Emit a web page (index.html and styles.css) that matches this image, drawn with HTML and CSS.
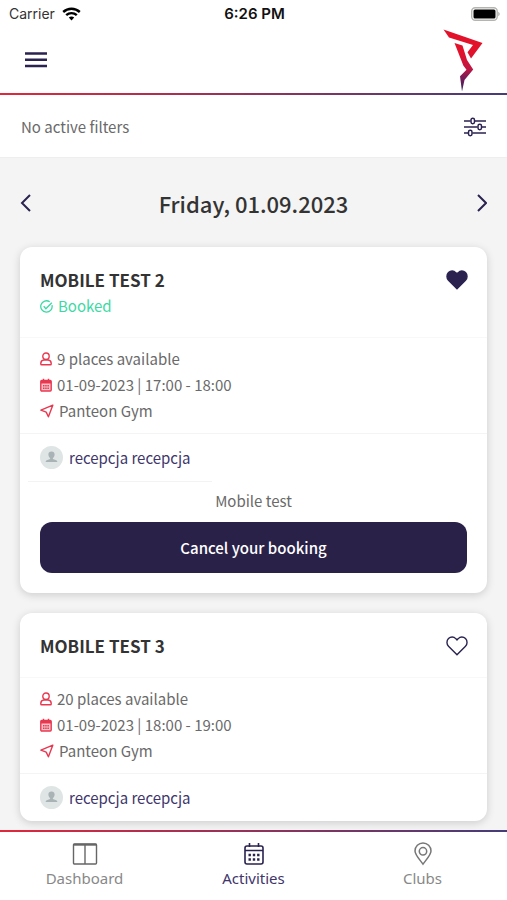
FILE: index.html
```html
<!DOCTYPE html>
<html lang="en">
<head>
<meta charset="utf-8">
<meta name="viewport" content="width=device-width, initial-scale=1">
<title>Activities</title>
<link rel="stylesheet" href="styles.css">
</head>
<body>
<svg class="defs" aria-hidden="true">
  <symbol id="person" viewBox="0 0 12 14">
    <circle cx="6" cy="4.200" r="3.200"/><path d="M3.800 8C1.800 8.200.8 9.600.8 11.400v.6c0 .5.300.8.800.8h8.800c.5 0 .8-.3.800-.8v-.6c0-1.800-1-3.200-3-3.400z"/>
  </symbol>
  <symbol id="schedule" viewBox="0 0 12 14">
    <path d="M3.500 .8v2.500M8.500 .8v2.500"/><rect x=".8" y="2.500" width="10.400" height="10.500" rx="1" fill="#fbc0c8"/><path d="M1 3.500h10M1 4.800h10"/><path d="M3 7.800h6M3 10.300h6" stroke-dasharray="1.500 .7"/>
  </symbol>
  <symbol id="arrow" viewBox="0 0 14 14">
    <path d="M12.800 1.200.9 6.200l5.300 1.900 2.200 4.700z"/>
  </symbol>
  <symbol id="avatar" viewBox="0 0 23 23">
    <circle cx="11.500" cy="11.500" r="11.500" fill="#dfe4e4"/>
    <path fill="#a9b3b5" d="M11.500 5.500c2 0 3.100 1.300 3.100 3 0 1.500-.7 2.900-1.700 3.600v1l3.300 1.200c.7.300 1.100.8 1.100 1.700H5.700c0-.9.400-1.400 1.100-1.700l3.300-1.200v-1c-1-.7-1.700-2.100-1.700-3.600 0-1.700 1.100-3 3.100-3z"/>
  </symbol>
  <symbol id="heart" viewBox="0 0 24 22">
    <path d="M12 19.800 3.500 11.200C1.500 9.200 1.400 5.700 3.500 3.600s5.300-2.100 7.200 0L12 4.900l1.300-1.300c1.900-2.100 5.100-2.100 7.200 0s2 5.600 0 7.600z"/>
  </symbol>
</svg>

<div class="app">
  <div class="status">
    <div class="carrier">Carrier
      <svg width="19" height="14" viewBox="0 0 19 14" fill="none" stroke="#000" stroke-width="2.400"><path d="M1.200 5c4.700-4.400 11.900-4.400 16.600 0"/><path d="M4.200 8.200c3-2.800 7.600-2.800 10.600 0"/><path d="m9.500 13.500-2.700-3c1.500-1.300 3.900-1.300 5.400 0z" fill="#000" stroke="none"/></svg>
    </div>
    <div class="clock">6:26 PM</div>
    <svg class="battery" width="30" height="14" viewBox="0 0 30 14"><rect x="1.700" y=".7" width="25.500" height="12.600" rx="3.500" fill="#fff" stroke="#b4b4b0" stroke-width="1.400"/><rect x="3.500" y="2.500" width="22" height="9" rx="1.500"/><path d="M28.200 4.800c2 .8 2 3.600 0 4.400z" fill="#b4b4b0"/></svg>
  </div>
  <header class="header">
    <button class="icon-button" aria-label="Menu"><svg width="22" height="16" viewBox="0 0 22 16" stroke="#2b2250" stroke-width="2.400"><path d="M0 1.500h22M0 7.800h22M0 14h22"/></svg></button>
    <a class="logo" href="#" aria-label="Home"><svg width="40" height="63" viewBox="0 0 40 63">
      <defs><linearGradient id="brand" x1="0" y1="0" x2="0" y2="63" gradientUnits="userSpaceOnUse"><stop offset="0" stop-color="#e3122a"/><stop offset=".38" stop-color="#e1122b"/><stop offset=".63" stop-color="#c01742"/><stop offset=".76" stop-color="#7d1a55"/><stop offset="1" stop-color="#30235d"/></linearGradient></defs>
      <path fill="url(#brand)" d="M.5.5 39.500 14 28 29.500l-3.500-6.300 5.500-7.300L6 8.500zM11.500 14l8 2.500 4.500 14.500 6.200 9.500-8.700 10.500L19 62.500 17 47.200l6.500-6.500-3.200-4.200z"/>
    </svg></a>
  </header>
  <div class="brand-line"></div>
  <section class="filters">
    <span>No active filters</span>
    <button class="icon-button" aria-label="Filters"><svg width="22" height="20" viewBox="0 0 22 20" fill="none" stroke="#2b2250" stroke-width="1.500"><path d="M0 4h6.500M11 4h11M0 10h13.500M18 10h4M0 16h4M8.500 16H22"/><rect x="7" y="1.200" width="3.500" height="5.600" rx="1.700"/><rect x="14" y="7.200" width="3.500" height="5.600" rx="1.700"/><rect x="4.500" y="13.200" width="3.500" height="5.600" rx="1.700"/></svg></button>
  </section>

  <main class="content">
    <div class="day">
      <button class="icon-button" aria-label="Previous day"><svg width="11" height="18" viewBox="0 0 11 18" fill="none" stroke="#2b2250" stroke-width="2"><path d="M10 1 2 9l8 8"/></svg></button>
      <h1>Friday, 01.09.2023</h1>
      <button class="icon-button" aria-label="Next day"><svg width="11" height="18" viewBox="0 0 11 18" fill="none" stroke="#2b2250" stroke-width="2"><path d="m2 1 8 8-8 8"/></svg></button>
    </div>

    <article class="card">
      <div class="card-head">
        <div>
          <h2>MOBILE TEST 2</h2>
          <p class="booked"><svg width="13" height="13" viewBox="0 0 13 13" fill="none" stroke="currentColor" stroke-width="1.300"><path d="M12 5.200A5.700 5.700 0 1 1 9.700 1.800"/><path d="m3.700 6.300 2.200 2.400L11.800 2.700"/></svg>Booked</p>
        </div>
        <button class="icon-button heart heart-on" aria-label="Remove from favourites"><svg width="24" height="22"><use href="#heart"/></svg></button>
      </div>
      <ul class="details">
        <li><svg width="12" height="14"><use href="#person"/></svg>9 places available</li>
        <li><svg width="12" height="14"><use href="#schedule"/></svg>01-09-2023 | 17:00 - 18:00</li>
        <li><svg width="14" height="14"><use href="#arrow"/></svg>Panteon Gym</li>
      </ul>
      <div class="coach"><svg width="23" height="23"><use href="#avatar"/></svg>recepcja recepcja</div>
      <div class="note">
        <p>Mobile test</p>
        <button class="cancel">Cancel your booking</button>
      </div>
    </article>

    <article class="card">
      <div class="card-head">
        <h2>MOBILE TEST 3</h2>
        <button class="icon-button heart" aria-label="Add to favourites"><svg width="24" height="22"><use href="#heart"/></svg></button>
      </div>
      <ul class="details">
        <li><svg width="12" height="14"><use href="#person"/></svg>20 places available</li>
        <li><svg width="12" height="14"><use href="#schedule"/></svg>01-09-2023 | 18:00 - 19:00</li>
        <li><svg width="14" height="14"><use href="#arrow"/></svg>Panteon Gym</li>
      </ul>
      <div class="coach"><svg width="23" height="23"><use href="#avatar"/></svg>recepcja recepcja</div>
    </article>
  </main>

  <div class="brand-line"></div>
  <nav class="tabs">
    <a href="#"><svg width="26" height="24" viewBox="0 0 26 24" fill="none" stroke="#666" stroke-width="1.400"><rect x="1.500" y="2" width="23" height="20" rx="1"/><path d="M13 2v20"/><path d="M1.500 2.700h23" stroke-width="2"/></svg>Dashboard</a>
    <a href="#" class="active" aria-current="page"><svg width="22" height="24" viewBox="0 0 22 24" fill="none" stroke="#2b2250" stroke-width="1.600"><rect x="2" y="4" width="18" height="18" rx="2"/><path d="M2 8.500h18M6.500 1v4M15.500 1v4"/><path d="M5.500 13h11M5.500 17.500h11" stroke-width="2.400" stroke-dasharray="2.400 1.900"/></svg>Activities</a>
    <a href="#"><svg width="18" height="24" viewBox="0 0 18 24" fill="none" stroke="#777" stroke-width="1.500"><path d="M9 22.200C6.500 18.500 1 13 1 9a8 8 0 0 1 16 0c0 4-5.500 9.500-8 13.200z"/><circle cx="9" cy="9.300" r="3.700"/></svg>Clubs</a>
  </nav>
</div>
</body>
</html>
```

FILE: styles.css
```css
* { box-sizing: border-box; }

body {
  margin: 0;
  background: #fff;
  color: #6a6a6a;
  font: 15px/26px "Noto Sans CJK SC", "Noto Sans", sans-serif;
}

h1, h2, p, ul { margin: 0; padding: 0; }
button { font: inherit; }
svg { flex: none; }

.defs { display: block; width: 0; height: 0; }

.app {
  display: flex;
  flex-direction: column;
  height: 100vh;
}

.icon-button {
  display: flex;
  padding: 0;
  border: 0;
  background: none;
  cursor: pointer;
}

.status {
  display: grid;
  grid-template-columns: 1fr auto 1fr;
  align-items: center;
  height: 27px;
  padding: 0 7px 0 9px;
  color: #111;
  font: 15px/18px Inter, sans-serif;
}
.carrier { display: flex; align-items: center; gap: 7px; color: #333; font-size: 14px; }
.clock { font-weight: 600; }
.battery { justify-self: end; }

.header {
  display: flex;
  align-items: center;
  justify-content: space-between;
  height: 66px;
  padding: 0 24px 0 25px;
}
.logo { display: flex; }

.brand-line {
  flex: none;
  height: 2px;
  background: linear-gradient(90deg, #e0283c, #453c78);
}

.filters {
  display: flex;
  align-items: center;
  justify-content: space-between;
  height: 63px;
  padding: 2px 21px 0;
  border-bottom: 1px solid #eee;
}

.content {
  flex: 1;
  min-height: 0;
  overflow: auto;
  scrollbar-width: none;
  padding: 0 20px 8px;
  background: #f4f4f4;
}

.day {
  display: flex;
  align-items: center;
  justify-content: space-between;
  height: 89px;
}
h1 { color: #333; font-size: 22px; font-weight: 500; line-height: 32px; }

.card {
  border-radius: 12px;
  background: #fff;
  box-shadow: 0 2px 8px rgb(0 0 0 / 16%);
}
.card + .card { margin-top: 20px; }

.card-head {
  display: flex;
  align-items: flex-start;
  justify-content: space-between;
  padding: 20px 18px 18px 20px;
  border-bottom: 1px solid #f8f8f8;
}
h2 { color: #333; font-size: 17px; font-weight: 700; line-height: 26px; }
.booked { display: flex; align-items: center; gap: 5px; color: #3dd9a4; }

.heart { padding-top: 2px; fill: none; stroke: #2b2250; stroke-width: 1.4; }
.heart-on { fill: #2b2250; }

.details {
  padding: 8px 20px 9px;
  border-bottom: 1px solid #f4f4f4;
  list-style: none;
}
.details li { display: flex; align-items: center; gap: 5px; }
.details svg { fill: none; stroke: #e73850; stroke-width: 1.4; stroke-linejoin: round; }

.coach {
  display: flex;
  align-items: center;
  gap: 6px;
  height: 47px;
  padding: 0 20px;
  color: #40366b;
}

.note {
  padding: 0 20px 20px;
  text-align: center;
}
.note::before {
  content: "";
  display: block;
  width: 184px;
  height: 1px;
  margin: 0 0 6px -12px;
  background: #f3f3f3;
}
.cancel {
  display: block;
  width: 100%;
  height: 51px;
  margin-top: 8px;
  border: 0;
  border-radius: 12px;
  background: #2a2149;
  color: #fff;
  font-weight: 500;
  cursor: pointer;
}

.tabs {
  display: grid;
  grid-template-columns: repeat(3, 1fr);
  height: 68px;
  padding-top: 10px;
}
.tabs a {
  display: flex;
  flex-direction: column;
  align-items: center;
  gap: 1px;
  color: #888;
  font: 15px/22px "Noto Sans", sans-serif;
  text-decoration: none;
}
.tabs .active { color: #40366b; }
```
